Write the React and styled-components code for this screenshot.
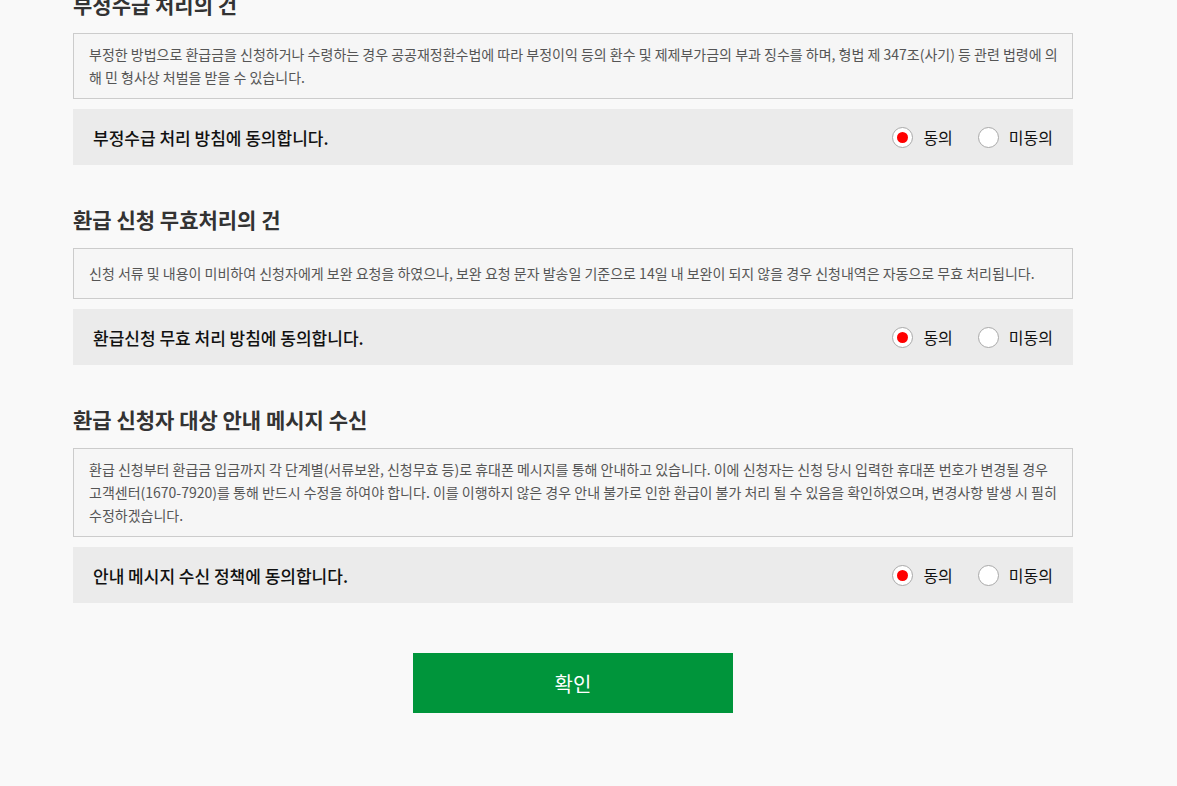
import React, { useState } from "react";
import styled, { createGlobalStyle } from "styled-components";

const GlobalStyle = createGlobalStyle`
  html, body {
    margin: 0;
    padding: 0;
    background: #f9f9f9;
    font-family: "Noto Sans CJK KR", "Noto Sans", sans-serif;
    color: #333;
  }
  * { box-sizing: border-box; }
`;

const Page = styled.div`
  width: 1000px;
  margin-left: 73px;
  padding-bottom: 72px;
  overflow: hidden;
`;

const Section = styled.section`
  margin-top: ${(p) => (p.$first ? "-11px" : "39px")};
`;

const Title = styled.h3`
  margin: 0 0 14px;
  font-size: 21px;
  line-height: 30px;
  font-weight: 700;
  color: #333;
`;

const Notice = styled.div`
  display: flex;
  align-items: center;
  min-height: 51px;
  padding: 9px 10px 9px 15px;
  background: #f6f6f6;
  border: 1px solid #cccccc;
  font-size: 14px;
  line-height: 23px;
  color: #555;
  word-break: break-all;
`;

const AgreeBar = styled.div`
  display: flex;
  align-items: center;
  justify-content: space-between;
  height: 56px;
  margin-top: 10px;
  padding: 0 20px;
  background: #ebebeb;
`;

const AgreeLabel = styled.span`
  font-size: 17px;
  font-weight: 500;
  color: #111;
`;

const Choices = styled.div`
  display: flex;
  align-items: center;
  gap: 25px;
`;

const Choice = styled.label`
  display: flex;
  align-items: center;
  gap: 10px;
  font-size: 16px;
  color: #111;
  cursor: pointer;
`;

const Dot = styled.span`
  position: relative;
  width: 21px;
  height: 21px;
  border-radius: 50%;
  border: 1px solid #a9a9a9;
  background: #fff;

  &::after {
    content: "";
    display: ${(p) => (p.$on ? "block" : "none")};
    position: absolute;
    left: 4px;
    top: 4px;
    width: 11px;
    height: 11px;
    border-radius: 50%;
    background: #ff0000;
  }
`;

const Actions = styled.div`
  display: flex;
  justify-content: center;
  margin-top: 50px;
`;

const Confirm = styled.button`
  width: 320px;
  height: 60px;
  border: none;
  background: #00953b;
  color: #fff;
  font-family: inherit;
  font-size: 20px;
  cursor: pointer;
`;

const items = [
  {
    title: "부정수급 처리의 건",
    text: "부정한 방법으로 환급금을 신청하거나 수령하는 경우 공공재정환수법에 따라 부정이익 등의 환수 및 제제부가금의 부과 징수를 하며, 형법 제 347조(사기) 등 관련 법령에 의해 민 형사상 처벌을 받을 수 있습니다.",
    agree: "부정수급 처리 방침에 동의합니다.",
  },
  {
    title: "환급 신청 무효처리의 건",
    text: "신청 서류 및 내용이 미비하여 신청자에게 보완 요청을 하였으나, 보완 요청 문자 발송일 기준으로 14일 내 보완이 되지 않을 경우 신청내역은 자동으로 무효 처리됩니다.",
    agree: "환급신청 무효 처리 방침에 동의합니다.",
  },
  {
    title: "환급 신청자 대상 안내 메시지 수신",
    text: "환급 신청부터 환급금 입금까지 각 단계별(서류보완, 신청무효 등)로 휴대폰 메시지를 통해 안내하고 있습니다. 이에 신청자는 신청 당시 입력한 휴대폰 번호가 변경될 경우 고객센터(1670-7920)를 통해 반드시 수정을 하여야 합니다. 이를 이행하지 않은 경우 안내 불가로 인한 환급이 불가 처리 될 수 있음을 확인하였으며, 변경사항 발생 시 필히 수정하겠습니다.",
    agree: "안내 메시지 수신 정책에 동의합니다.",
  },
];

function AgreeRow({ label, value, onChange }) {
  return (
    <AgreeBar>
      <AgreeLabel>{label}</AgreeLabel>
      <Choices>
        <Choice onClick={() => onChange(true)}>
          <Dot $on={value} />
          동의
        </Choice>
        <Choice onClick={() => onChange(false)}>
          <Dot $on={!value} />
          미동의
        </Choice>
      </Choices>
    </AgreeBar>
  );
}

export default function App() {
  const [answers, setAnswers] = useState([true, true, true]);

  const setAnswer = (i, v) =>
    setAnswers((prev) => prev.map((a, j) => (j === i ? v : a)));

  return (
    <>
      <GlobalStyle />
      <Page>
        {items.map((item, i) => (
          <Section key={item.title} $first={i === 0}>
            <Title>{item.title}</Title>
            <Notice>{item.text}</Notice>
            <AgreeRow
              label={item.agree}
              value={answers[i]}
              onChange={(v) => setAnswer(i, v)}
            />
          </Section>
        ))}
        <Actions>
          <Confirm>확인</Confirm>
        </Actions>
      </Page>
    </>
  );
}
